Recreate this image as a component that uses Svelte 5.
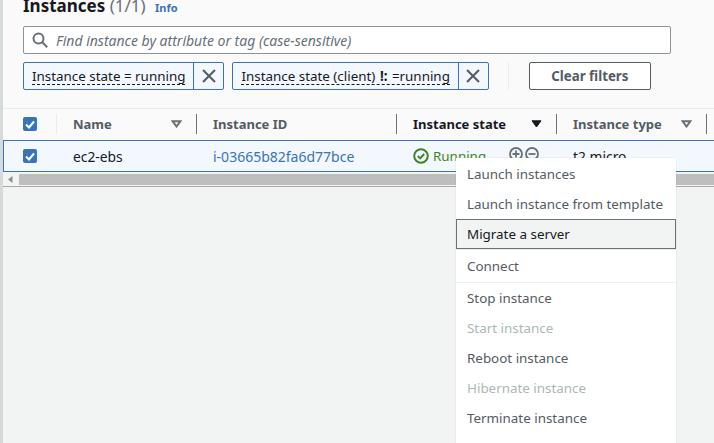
<script>
  const menu = [
    { label: 'Launch instances', top: true },
    { label: 'Launch instance from template' },
    { label: 'Migrate a server', hover: true },
    { label: 'Connect', sep: true },
    { label: 'Stop instance', sep: true, first: true },
    { label: 'Start instance', off: true },
    { label: 'Reboot instance' },
    { label: 'Hibernate instance', off: true },
    { label: 'Terminate instance' }
  ];
</script>

<div class="page">
  <div class="head">
    <h1>Instances <span class="count">(1/1)</span> <a href="#info">Info</a></h1>
    <div class="search">
      <svg width="16" height="16" viewBox="0 0 16 16" fill="none" stroke="#687078" stroke-width="2"><circle cx="6.5" cy="6.5" r="5"/><path d="M10 10l5.2 5.2"/></svg>
      <em>Find instance by attribute or tag (case-sensitive)</em>
    </div>
    <div class="filters">
      <div class="token">
        <span class="token-label"><span class="dash">Instance state = running</span></span>
        <span class="token-x"><svg width="14" height="14" viewBox="0 0 14 14" stroke="#545b64" stroke-width="2" fill="none"><path d="M1 1l12 12M13 1L1 13"/></svg></span>
      </div>
      <div class="token">
        <span class="token-label"><span class="dash">Instance state (client) <b>!:</b> =running</span></span>
        <span class="token-x"><svg width="14" height="14" viewBox="0 0 14 14" stroke="#545b64" stroke-width="2" fill="none"><path d="M1 1l12 12M13 1L1 13"/></svg></span>
      </div>
      <div class="divider"></div>
      <button>Clear filters</button>
    </div>
  </div>

  <div class="table">
    <div class="row header">
      <div class="cell c-check"><span class="check"><svg width="10" height="9" viewBox="0 0 10 9" fill="none" stroke="#fff" stroke-width="2"><path d="M1 4.5l3 3 5-6"/></svg></span></div>
      <div class="cell c-name"><span>Name</span><svg class="sort" width="11" height="8" viewBox="0 0 11 8" fill="none" stroke="#687078" stroke-width="2"><path d="M1.5 1.2h8L5.5 6.5z"/></svg></div>
      <div class="cell c-id"><span>Instance ID</span></div>
      <div class="cell c-state"><span class="active">Instance state</span><svg class="sort" width="11" height="8" viewBox="0 0 11 8" fill="#16191f" stroke="#16191f" stroke-width="1"><path d="M1 .8h9L5.5 7z"/></svg></div>
      <div class="cell c-type"><span>Instance type</span><svg class="sort" width="11" height="8" viewBox="0 0 11 8" fill="none" stroke="#687078" stroke-width="2"><path d="M1.5 1.2h8L5.5 6.5z"/></svg></div>
    </div>
    <div class="row body">
      <div class="cell c-check"><span class="check"><svg width="10" height="9" viewBox="0 0 10 9" fill="none" stroke="#fff" stroke-width="2"><path d="M1 4.5l3 3 5-6"/></svg></span></div>
      <div class="cell c-name">ec2-ebs</div>
      <div class="cell c-id link">i-03665b82fa6d77bce</div>
      <div class="cell c-state">
        <span class="running">
          <svg width="16" height="16" viewBox="0 0 16 16" fill="none" stroke="#3f8624" stroke-width="2"><circle cx="8" cy="8" r="6.8"/><path d="M4.8 8l2.4 2.4 4-4.4"/></svg>
          Running
        </span>
        <span class="zoom">
          <svg width="14" height="14" viewBox="0 0 14 14" fill="none" stroke="#687078" stroke-width="1.8"><circle cx="7" cy="7" r="6"/><path d="M3.5 7h7M7 3.5v7"/></svg>
          <svg width="14" height="14" viewBox="0 0 14 14" fill="none" stroke="#687078" stroke-width="1.8"><circle cx="7" cy="7" r="6"/><path d="M3.5 7h7"/></svg>
        </span>
      </div>
      <div class="cell c-type">t2.micro</div>
    </div>
    <div class="scrollbar">
      <svg width="5" height="7" viewBox="0 0 5 7" fill="#8a8f94"><path d="M4.5 0v7L0 3.5z"/></svg>
      <div class="thumb"></div>
    </div>
  </div>

  <ul class="menu">
    {#each menu as item}
      <li class:hover={item.hover} class:off={item.off} class:sep={item.sep} class:first={item.first} class:top={item.top}>{item.label}</li>
    {/each}
  </ul>
</div>

<style>
  :global(body) {
    margin: 0;
    overflow: hidden;
  }

  .page {
    position: relative;
    width: 714px;
    height: 443px;
    overflow: hidden;
    box-sizing: border-box;
    border-left: 3px solid #d5dbdb;
    background: #f2f3f3;
    font-family: "Noto Sans", sans-serif;
    font-size: 13px;
    color: #16191f;
  }

  .head {
    display: flow-root;
    height: 109px;
    box-sizing: border-box;
    padding-left: 20px;
    background: #fafafa;
    border-bottom: 1px solid #eaeded;
  }

  h1 {
    margin: -6px 0 0;
    font-size: 17px;
    line-height: 24px;
    font-weight: 700;
  }

  .count {
    font-weight: 400;
    color: #687078;
  }

  h1 a {
    margin-left: 5px;
    font-size: 11px;
    line-height: 1;
    font-weight: 700;
    color: #3a73b8;
    text-decoration: none;
  }

  .search {
    display: flex;
    align-items: center;
    gap: 8px;
    width: 648px;
    height: 28px;
    margin-top: 8px;
    padding-left: 8px;
    box-sizing: border-box;
    background: #fff;
    border: 1px solid #879596;
    border-radius: 2px;
    font-size: 14px;
    color: #687078;
  }

  .filters {
    display: flex;
    align-items: center;
    gap: 8px;
    margin-top: 8px;
  }

  .token {
    display: flex;
    height: 28px;
    box-sizing: border-box;
    background: #f2f8fd;
    border: 1px solid #3a73b8;
    border-radius: 2px;
    font-size: 13.4px;
  }

  .token-label {
    display: flex;
    align-items: center;
    padding: 0 8px;
    border-right: 1px solid #3a73b8;
    color: #16191f;
  }

  .dash {
    line-height: 16px;
    border-bottom: 1px dashed #16191f;
  }

  .dash b {
    margin: 0 1px;
  }

  .token-x {
    display: flex;
    align-items: center;
    justify-content: center;
    width: 29px;
  }

  .divider {
    width: 1px;
    height: 28px;
    margin: 0 12px 0 11px;
    background: #eaeded;
  }

  button {
    width: 122px;
    height: 28px;
    padding: 0;
    background: #fff;
    border: 1px solid #545b64;
    border-radius: 2px;
    font: 700 13.3px "Noto Sans", sans-serif;
    color: #545b64;
  }

  .table {
    background: #fafafa;
  }

  .row {
    display: flex;
    align-items: center;
    box-sizing: border-box;
  }

  .header {
    height: 31px;
    padding-bottom: 1px;
    font-weight: 700;
    color: #545b64;
  }

  .body {
    height: 32px;
    background: #f2f8fd;
    box-shadow: inset 1px 0 #3a73b8, inset 0 1px #3a73b8, inset 0 -1px #3a73b8;
    font-size: 13.8px;
  }

  .cell {
    display: flex;
    align-items: center;
    justify-content: space-between;
    box-sizing: border-box;
    height: 20px;
    white-space: nowrap;
  }

  .header .cell {
    border-right: 1px solid #687078;
  }

  .header .c-check {
    border-right-color: #eaeded;
  }

  .c-check {
    width: 54px;
    padding-left: 20px;
  }

  .c-name {
    width: 140px;
    padding: 0 14px 0 16px;
  }

  .c-id {
    width: 200px;
    padding-left: 16px;
  }

  .c-state {
    width: 160px;
    padding: 0 14px 0 16px;
  }

  .c-type {
    width: 150px;
    padding: 0 14px 0 16px;
  }

  .body .cell {
    justify-content: flex-start;
  }

  .active {
    color: #16191f;
  }

  .check {
    display: flex;
    align-items: center;
    justify-content: center;
    width: 14px;
    height: 14px;
    background: #3a73b8;
    border-radius: 2px;
  }

  .link {
    color: #3a73b8;
    font-size: 14px;
  }

  .running {
    display: flex;
    align-items: center;
    gap: 4px;
    font-size: 13.4px;
    color: #3f8624;
  }

  .zoom {
    display: flex;
    gap: 2px;
    margin-left: 23px;
    margin-top: -4px;
  }

  .scrollbar {
    display: flex;
    align-items: center;
    gap: 6px;
    height: 15px;
    padding-left: 5px;
    box-sizing: border-box;
    background: #f2f3f3;
    border-bottom: 1px solid #a8a8a8;
  }

  .thumb {
    flex: 1;
    height: 11px;
    background: #bebebe;
  }

  .menu {
    position: absolute;
    left: 453px;
    top: 158px;
    width: 220px;
    height: 300px;
    margin: 0;
    padding: 0;
    list-style: none;
    background: #fff;
    font-size: 13.4px;
    color: #545b64;
    box-shadow: 0 0 2px rgba(0, 28, 36, 0.1);
  }

  .menu li {
    height: 30px;
    line-height: 30px;
    padding-left: 11px;
    box-sizing: border-box;
  }

  .menu .top {
    height: 31px;
    line-height: 32px;
  }

  .menu .hover {
    line-height: 28px;
    padding-left: 10px;
    background: #f2f3f3;
    border: 1px solid #687078;
    color: #16191f;
  }

  .menu .sep {
    height: 33px;
    line-height: 32px;
    border-top: 1px solid #eaeded;
  }

  .menu .first {
    height: 31px;
    line-height: 30px;
  }

  .menu .off {
    color: #aab7b8;
  }
</style>
